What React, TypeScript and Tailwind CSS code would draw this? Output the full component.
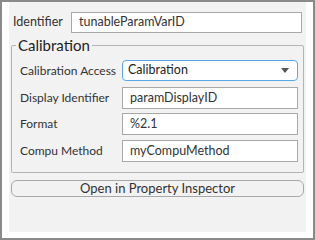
import React from "react";

export default function App() {
  const font = { fontFamily: 'Lato, "Noto Sans", sans-serif' };
  return (
    <div
      className="w-[315px] h-[240px] bg-white border-l-2 border-t-2 border-r-2 border-b-2 border-[#8a8a8a] pl-[7px] pr-[7px] pb-[6px] text-[#333333]"
      style={font}
    >
      <div className="h-full bg-[#f2f2f2] flex flex-col px-[2px]">
        <div className="flex items-center mt-[10px] pl-[2px] pr-[2px]">
          <span className="text-[12.5px] w-[58px] leading-none whitespace-nowrap">Identifier</span>
          <div className="flex-1 h-[21px] bg-white border border-[#a8a8a8] flex items-center pl-[7px] text-[12.5px]">
            tunableParamVarID
          </div>
        </div>
        <fieldset className="mt-[5px] border border-[#b4b4b4] rounded-[2px] pl-[8px] pr-[5px] pb-[10px] pt-[2px]">
          <legend className="text-[15px] leading-none px-[2px] ml-[-4px] text-[#222]">Calibration</legend>
          <div className="flex items-center mt-[5px]">
            <span className="text-[12px] w-[102px] whitespace-nowrap">Calibration Access</span>
            <div className="flex-1 h-[21px] bg-white border border-[#5aa6e6] rounded-[4px] flex items-center justify-between pl-[5px] pr-[8px] text-[12.5px] text-[#222]">
              <span>Calibration</span>
              <svg width="8" height="5" viewBox="0 0 8 5"><path d="M0 0 L8 0 L4 5 Z" fill="#555" /></svg>
            </div>
          </div>
          <div className="flex items-center mt-[6px]">
            <span className="text-[12px] w-[102px] whitespace-nowrap">Display Identifier</span>
            <div className="flex-1 h-[22px] bg-white border border-[#a8a8a8] flex items-center pl-[7px] text-[12.5px]">paramDisplayID</div>
          </div>
          <div className="flex items-center mt-[4px]">
            <span className="text-[12px] w-[102px] whitespace-nowrap">Format</span>
            <div className="flex-1 h-[22px] bg-white border border-[#a8a8a8] flex items-center pl-[7px] text-[12.5px]">%2.1</div>
          </div>
          <div className="flex items-center mt-[5px]">
            <span className="text-[12px] w-[102px] whitespace-nowrap">Compu Method</span>
            <div className="flex-1 h-[22px] bg-white border border-[#a8a8a8] flex items-center pl-[7px] text-[12.5px]">myCompuMethod</div>
          </div>
        </fieldset>
        <button className="mt-[7px] h-[17px] border border-[#a8a8a8] rounded-[6px] bg-[#f2f2f2] text-[13px] leading-none flex items-center justify-center">
          Open in Property Inspector
        </button>
      </div>
    </div>
  );
}
